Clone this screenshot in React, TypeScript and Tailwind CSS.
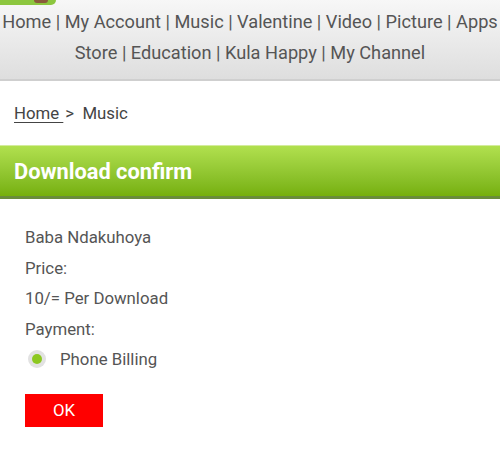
export default function App() {
  const links = ['Home', 'My Account', 'Music', 'Valentine', 'Video', 'Picture', 'Apps Store', 'Education', 'Kula Happy', 'My Channel']

  return (
    <div className="w-[500px] h-[450px] overflow-hidden bg-white font-['Roboto',sans-serif] text-[#555]">
      {/* top nav */}
      <div className="relative bg-gradient-to-b from-[#f7f7f7] to-[#dedede] border-b-2 border-[#cfcfcf] h-[81px] pt-[7px]">
        <div className="absolute left-0 top-0 w-[56px] h-[5px] bg-[#8cc63f] rounded-br-[10px] overflow-hidden">
          <div className="absolute left-[34px] top-0 w-[14px] h-[3px] bg-[#8a5a3a] rounded-b-full" />
        </div>
        <p className="text-center text-[18.2px] leading-[30.5px] text-[#555]">
          {links.join(' | ')}
        </p>
      </div>

      {/* breadcrumb */}
      <div className="px-[14px] pt-[20px] h-[64px] text-[16.8px] text-[#444]">
        <span className="underline underline-offset-[3px]">Home </span>
        <span className="ml-[2px]">&gt;&nbsp; Music</span>
      </div>

      {/* title bar */}
      <div className="h-[54px] bg-gradient-to-b from-[#b1e04e] to-[#76b00a] border-t border-[#d4ec9c] border-b-[3px] border-b-[#6a8d3a] flex items-center px-[14px]">
        <h1 className="text-white font-bold text-[21.8px] mt-[2px]">Download confirm</h1>
      </div>

      {/* content */}
      <div className="px-[25px] pt-[23px] text-[16.8px] leading-[30.5px]">
        <div>Baba Ndakuhoya</div>
        <div>Price:</div>
        <div>10/= Per Download</div>
        <div>Payment:</div>
        <label className="flex items-center">
          <span className="ml-[3px] w-[18px] h-[18px] rounded-full bg-[#e2e2e2] flex items-center justify-center">
            <span className="w-[10px] h-[10px] rounded-full bg-[#8cc820]" />
          </span>
          <span className="ml-[14px]">Phone Billing</span>
        </label>
        <button className="mt-[19px] w-[78px] h-[33px] bg-[#ff0000] text-white text-[16.8px] leading-none">OK</button>
      </div>
    </div>
  )
}
